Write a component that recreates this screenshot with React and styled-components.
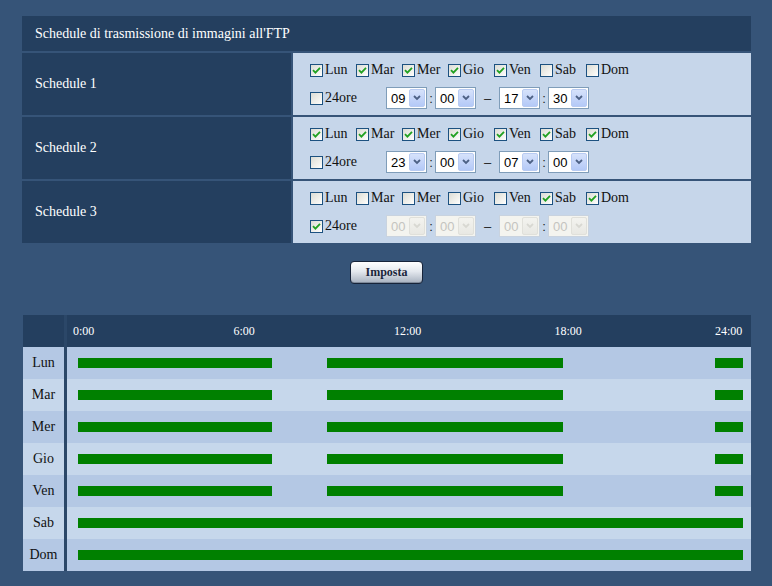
import React from "react";
import styled, { createGlobalStyle, css } from "styled-components";

const GlobalStyle = createGlobalStyle`
  body {
    margin: 0;
    background-color: #365478;
    font-family: "Liberation Serif", "Times New Roman", serif;
  }
`;

const Page = styled.div`
  width: 772px;
  height: 586px;
  padding: 16px 0 0 22px;
  box-sizing: border-box;
`;

const Table = styled.div`
  display: grid;
  grid-template-columns: 269px 458px;
  gap: 2px;
  width: 729px;
`;

const TitleCell = styled.div`
  grid-column: 1 / -1;
  height: 35px;
  background-color: #243f5f;
  color: #ffffff;
  font-size: 14px;
  display: flex;
  align-items: center;
  padding-left: 13px;
`;

const LabelCell = styled.div`
  height: 62px;
  background-color: #243f5f;
  color: #ffffff;
  font-size: 14px;
  display: flex;
  align-items: center;
  padding-left: 13px;
`;

const OptionsCell = styled.div`
  height: 62px;
  box-sizing: border-box;
  background-color: #c6d6ea;
  padding: 9px 0 0 17px;
  display: flex;
  flex-direction: column;
`;

const DayRow = styled.div`
  display: flex;
  align-items: center;
  height: 16px;
`;

const DayItem = styled.label`
  display: flex;
  align-items: center;
  width: 46px;
  font-size: 14px;
  color: #111;
  white-space: nowrap;
`;

const Box = styled.span`
  width: 11px;
  height: 11px;
  border: 1px solid #1c5180;
  background: linear-gradient(135deg, #dcdcd5 0%, #f4f4f0 70%, #ffffff 100%);
  margin-right: 2px;
  display: inline-flex;
  align-items: center;
  justify-content: center;
  flex-shrink: 0;
`;

const TimeRow = styled.div`
  display: flex;
  align-items: center;
  height: 22px;
  margin-top: 9px;
`;

const AllDay = styled(DayItem)`
  width: 76px;
`;

const Select = styled.span`
  width: 41px;
  height: 22px;
  box-sizing: border-box;
  border: 1px solid ${(p) => (p.$disabled ? "#c9d3df" : "#7f9db9")};
  background-color: ${(p) => (p.$disabled ? "#f4f4ef" : "#ffffff")};
  color: ${(p) => (p.$disabled ? "#c4c4c0" : "#000000")};
  font-family: "Liberation Sans", Arial, sans-serif;
  font-size: 13px;
  display: flex;
  align-items: center;
  justify-content: space-between;
  padding: 1px 1px 1px 4px;
`;

const Arrow = styled.span`
  width: 16px;
  height: 18px;
  border-radius: 2px;
  display: flex;
  align-items: center;
  justify-content: center;
  ${(p) =>
    p.$disabled
      ? css`
          background: linear-gradient(#f3f3ef, #e8e8e3);
          border: 1px solid #e0e0da;
        `
      : css`
          background: linear-gradient(#d6e2fb, #b4c9f7);
          border: 1px solid #b8cbf2;
        `}
  box-sizing: border-box;
`;

const Sep = styled.span`
  font-family: "Liberation Sans", Arial, sans-serif;
  font-size: 13px;
  color: #222;
  width: ${(p) => p.$w}px;
  text-align: center;
`;

const ButtonRow = styled.div`
  display: flex;
  justify-content: center;
  margin-top: 18px;
  width: 729px;
`;

const Button = styled.button`
  width: 73px;
  height: 23px;
  border: 1px solid #17243a;
  border-radius: 4px;
  background: linear-gradient(#ffffff 0%, #e4e8ee 45%, #a7b1bf 100%);
  box-shadow: inset 0 -1px 0 #7f8a9a;
  font-family: "Liberation Serif", "Times New Roman", serif;
  font-weight: bold;
  font-size: 12px;
  color: #1b263a;
  padding: 0;
`;

const Chart = styled.div`
  margin-top: 31px;
  margin-left: 1px;
  width: 728px;
`;

const ChartRow = styled.div`
  display: grid;
  grid-template-columns: 41px 3px 684px;
  height: 32px;
  background-color: ${(p) => (p.$head ? "#243f5f" : p.$alt ? "#c6d7eb" : "#b4c8e4")};
`;

const DayLabel = styled.div`
  display: flex;
  align-items: center;
  justify-content: center;
  font-size: 14px;
  color: #111;
`;

const Divider = styled.div`
  background-color: #2b4768;
`;

const Track = styled.div`
  position: relative;
`;

const Tick = styled.span`
  position: absolute;
  top: 9px;
  font-size: 12px;
  color: #ffffff;
`;

const Bar = styled.span`
  position: absolute;
  top: 11px;
  height: 10px;
  background-color: #008000;
`;

const Check = () => (
  <svg width="9" height="9" viewBox="0 0 9 9">
    <path d="M1 4.2 L3.4 6.6 L8 1.8" fill="none" stroke="#21a121" strokeWidth="1.8" />
  </svg>
);

const Chevron = ({ disabled }) => (
  <svg width="8" height="6" viewBox="0 0 8 6">
    <path
      d="M1 1 L4 4 L7 1"
      fill="none"
      stroke={disabled ? "#d8d8d2" : "#4d6185"}
      strokeWidth="1.8"
    />
  </svg>
);

const CheckBox = ({ checked }) => <Box>{checked && <Check />}</Box>;

const TimeSelect = ({ value, disabled }) => (
  <Select $disabled={disabled}>
    {value}
    <Arrow $disabled={disabled}>
      <Chevron disabled={disabled} />
    </Arrow>
  </Select>
);

const days = ["Lun", "Mar", "Mer", "Gio", "Ven", "Sab", "Dom"];

const schedules = [
  { name: "Schedule 1", on: [1, 1, 1, 1, 1, 0, 0], allDay: false, time: ["09", "00", "17", "30"] },
  { name: "Schedule 2", on: [1, 1, 1, 1, 1, 1, 1], allDay: false, time: ["23", "00", "07", "00"] },
  { name: "Schedule 3", on: [0, 0, 0, 0, 0, 1, 1], allDay: true, time: ["00", "00", "00", "00"] },
];

const weekday = [
  [0, 7],
  [9, 17.5],
  [23, 24],
];
const weekend = [[0, 24]];

const hourX = (h) => 11 + (h * 665) / 24;

const ticks = ["0:00", "6:00", "12:00", "18:00", "24:00"];

const App = () => {
  return (
    <Page>
      <GlobalStyle />
      <Table>
        <TitleCell>Schedule di trasmissione di immagini all'FTP</TitleCell>
        {schedules.map((s) => (
          <React.Fragment key={s.name}>
            <LabelCell>{s.name}</LabelCell>
            <OptionsCell>
              <DayRow>
                {days.map((d, i) => (
                  <DayItem key={d}>
                    <CheckBox checked={!!s.on[i]} />
                    {d}
                  </DayItem>
                ))}
              </DayRow>
              <TimeRow>
                <AllDay>
                  <CheckBox checked={s.allDay} />
                  24ore
                </AllDay>
                <TimeSelect value={s.time[0]} disabled={s.allDay} />
                <Sep $w={8}>:</Sep>
                <TimeSelect value={s.time[1]} disabled={s.allDay} />
                <Sep $w={23}>–</Sep>
                <TimeSelect value={s.time[2]} disabled={s.allDay} />
                <Sep $w={8}>:</Sep>
                <TimeSelect value={s.time[3]} disabled={s.allDay} />
              </TimeRow>
            </OptionsCell>
          </React.Fragment>
        ))}
      </Table>
      <ButtonRow>
        <Button>Imposta</Button>
      </ButtonRow>
      <Chart>
        <ChartRow $head>
          <div />
          <Divider />
          <Track>
            {ticks.map((t, i) => (
              <Tick key={t} style={{ left: 6 + i * 160.5 }}>
                {t}
              </Tick>
            ))}
          </Track>
        </ChartRow>
        {days.map((d, i) => (
          <ChartRow key={d} $alt={i % 2 === 1}>
            <DayLabel>{d}</DayLabel>
            <Divider />
            <Track>
              {(i < 5 ? weekday : weekend).map(([a, b]) => (
                <Bar key={a} style={{ left: hourX(a), width: hourX(b) - hourX(a) }} />
              ))}
            </Track>
          </ChartRow>
        ))}
      </Chart>
    </Page>
  );
};

export default App;
